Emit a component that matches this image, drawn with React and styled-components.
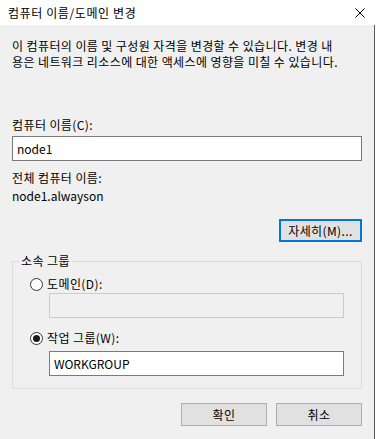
import React from 'react';
import styled, { createGlobalStyle } from 'styled-components';

const GlobalStyle = createGlobalStyle`
	html, body {
		margin: 0;
		padding: 0;
		background: #ffffff;
	}
	body {
		font-family: "Noto Sans CJK KR", "Noto Sans", sans-serif;
		font-size: 12px;
		letter-spacing: 0.4px;
		color: #000000;
	}
`;

const Window = styled.div`
	width: 376px;
	height: 439px;
	display: flex;
	flex-direction: column;
	overflow: hidden;
`;

const TitleBar = styled.div`
	height: 25px;
	flex: none;
	display: flex;
	align-items: center;
	justify-content: space-between;
	padding: 0 11px 0 8px;
	background: #ffffff;
	line-height: 16px;
	letter-spacing: 0.6px;
`;

const CloseButton = styled.svg`
	width: 10px;
	height: 10px;
	display: block;
`;

const Body = styled.div`
	flex: 1;
	width: 375px;
	box-sizing: border-box;
	background: #f0f0f0;
	border-right: 1px solid #5a5a5a;
	padding: 13px 12px 0 12px;
	display: flex;
	flex-direction: column;
	line-height: 16px;
`;

const Text = styled.div`
	margin-top: ${(p) => p.$top || 0}px;
	white-space: nowrap;
	letter-spacing: ${(p) => (p.$latin ? '0' : 'inherit')};
`;

const TextInput = styled.div`
	box-sizing: border-box;
	height: 25px;
	margin-top: ${(p) => p.$top || 0}px;
	margin-left: ${(p) => p.$indent || 0}px;
	padding: 0 4px;
	display: flex;
	align-items: center;
	letter-spacing: 0;
	background: ${(p) => (p.$disabled ? '#f0f0f0' : '#ffffff')};
	border: 1px solid ${(p) => (p.$disabled ? '#cccccc' : '#7a7a7a')};
`;

const Button = styled.div`
	box-sizing: border-box;
	width: ${(p) => p.$width}px;
	height: 23px;
	display: flex;
	align-items: center;
	justify-content: center;
	background: #e1e1e1;
	border: ${(p) => (p.$default ? '2px solid #0078d7' : '1px solid #adadad')};
`;

const RightRow = styled.div`
	display: flex;
	justify-content: flex-end;
	gap: 9px;
	margin-top: ${(p) => p.$top || 0}px;
`;

const Group = styled.fieldset`
	margin: 11px 0 0 0;
	padding: 0 0 12px 0;
	border: 1px solid #dcdcdc;
	min-width: 0;
`;

const Legend = styled.legend`
	margin-left: 6px;
	padding: 0 2px;
	line-height: 16px;
`;

const GroupBody = styled.div`
	padding: 0 17px;
	display: flex;
	flex-direction: column;
`;

const RadioRow = styled.div`
	display: flex;
	align-items: center;
	gap: 4px;
	height: 16px;
	margin-top: ${(p) => p.$top || 0}px;
`;

const Radio = styled.span`
	box-sizing: border-box;
	width: 13px;
	height: 13px;
	border-radius: 50%;
	border: 1px solid #333333;
	background: #ffffff;
	display: flex;
	align-items: center;
	justify-content: center;

	&::after {
		content: '';
		width: 7px;
		height: 7px;
		border-radius: 50%;
		background: #1a1a1a;
		display: ${(p) => (p.$checked ? 'block' : 'none')};
	}
`;

export default function App() {
	return (
		<>
			<GlobalStyle />
			<Window>
				<TitleBar>
					<span>컴퓨터 이름/도메인 변경</span>
					<CloseButton viewBox="0 0 10 10">
						<path d="M0.5 0.5 L9.5 9.5 M9.5 0.5 L0.5 9.5" stroke="#000" strokeWidth="1" fill="none" />
					</CloseButton>
				</TitleBar>
				<Body>
					<Text>이 컴퓨터의 이름 및 구성원 자격을 변경할 수 있습니다. 변경 내</Text>
					<Text>용은 네트워크 리소스에 대한 액세스에 영향을 미칠 수 있습니다.</Text>
					<Text $top={47}>컴퓨터 이름(C):</Text>
					<TextInput $top={3}>node1</TextInput>
					<Text $top={9}>전체 컴퓨터 이름:</Text>
					<Text $top={2} $latin>node1.alwayson</Text>
					<RightRow $top={15}>
						<Button $width={83} $default>자세히(M)...</Button>
					</RightRow>
					<Group>
						<Legend>소속 그룹</Legend>
						<GroupBody>
							<RadioRow $top={7}>
								<Radio />
								<span>도메인(D):</span>
							</RadioRow>
							<TextInput $top={1} $indent={19} $disabled />
							<RadioRow $top={12}>
								<Radio $checked />
								<span>작업 그룹(W):</span>
							</RadioRow>
							<TextInput $top={5} $indent={19}>WORKGROUP</TextInput>
						</GroupBody>
					</Group>
					<RightRow $top={14}>
						<Button $width={86}>확인</Button>
						<Button $width={86}>취소</Button>
					</RightRow>
				</Body>
			</Window>
		</>
	);
}
